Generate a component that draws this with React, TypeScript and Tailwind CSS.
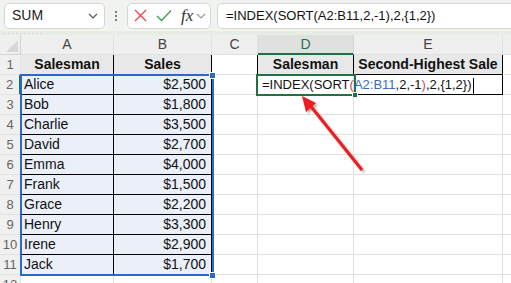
import React from 'react';

const font = { fontFamily: '"Liberation Sans", Arial, sans-serif' };

type CellProps = {
  w: string;
  className?: string;
  children?: React.ReactNode;
};

const Cell: React.FC<CellProps> = ({ w, className = '', children }) => (
  <div className={`${w} h-[20px] shrink-0 border-r border-b border-[#e1e1e1] leading-[19px] whitespace-nowrap ${className}`}>
    {children}
  </div>
);

const rows: [string, string][] = [
  ['Alice', '$2,500'],
  ['Bob', '$1,800'],
  ['Charlie', '$3,500'],
  ['David', '$2,700'],
  ['Emma', '$4,000'],
  ['Frank', '$1,500'],
  ['Grace', '$2,200'],
  ['Henry', '$3,300'],
  ['Irene', '$2,900'],
  ['Jack', '$1,700'],
];

const Chevron = ({ className = '' }: { className?: string }) => (
  <svg width="10" height="6" viewBox="0 0 10 6" className={className}>
    <path d="M1 1l4 4 4-4" fill="none" stroke="currentColor" strokeWidth="1.2" />
  </svg>
);

const FormulaText = () => (
  <>
    <span>=INDEX(SORT</span>
    <span className="text-[#d2455a]">(</span>
    <span className="text-[#3a6bc4]">A2:B11</span>
    <span>,2,-1</span>
    <span className="text-[#d2455a]">)</span>
    <span>,2,{'{'}1,2{'}'})</span>
  </>
);

const FormulaBar = () => (
  <div className="bg-[#f1f3f0]">
    <div className="h-[31px] flex items-center pl-[4px] gap-0">
      <div className="w-[101px] h-[26px] bg-white border border-[#d6d6d6] rounded-[5px] flex items-center justify-between pl-[7px] pr-[6px] text-[14px] text-[#222]">
        <span>SUM</span>
        <Chevron className="text-[#555]" />
      </div>
      <div className="w-[22px] flex flex-col items-center gap-[2px]">
        <span className="w-[2px] h-[2px] bg-[#555] rounded-full" />
        <span className="w-[2px] h-[2px] bg-[#555] rounded-full" />
        <span className="w-[2px] h-[2px] bg-[#555] rounded-full" />
      </div>
      <div className="w-[84px] h-[26px] bg-white border border-[#d6d6d6] rounded-[5px] flex items-center pl-[6px] gap-[9px]">
        <svg width="13" height="13" viewBox="0 0 13 13">
          <path d="M1 1l11 11M12 1L1 12" stroke="#e0474c" strokeWidth="1.3" />
        </svg>
        <svg width="16" height="13" viewBox="0 0 16 13">
          <path d="M1 7l4.5 4.5L15 1.5" fill="none" stroke="#3e9a50" strokeWidth="1.3" />
        </svg>
        <div className="flex items-center gap-[3px]">
          <span className="italic text-[17px] text-[#333] leading-none" style={{ fontFamily: '"Liberation Serif", serif' }}>fx</span>
          <Chevron className="text-[#999]" />
        </div>
      </div>
      <div className="ml-[6px] flex-1 h-[26px] bg-white border border-[#d6d6d6] border-r-0 rounded-l-[5px] flex items-center pl-[8px] text-[13px] text-[#111]">
        =INDEX(SORT(A2:B11,2,-1),2,{'{'}1,2{'}'})
      </div>
    </div>
    <div className="h-[4px] bg-[#e6eee2] flex items-center pl-[4px] gap-[3px]">
      {Array.from({ length: 10 }).map((_, i) => (
        <span key={i} className="w-[1px] h-[1px] bg-[#c9d3c4]" />
      ))}
    </div>
  </div>
);

const W = {
  h: 'w-[21px]',
  a: 'w-[93px]',
  b: 'w-[98px]',
  c: 'w-[46px]',
  d: 'w-[96px]',
  e: 'w-[149px]',
  f: 'w-[40px]',
};

const hdr = 'bg-[#efefef] text-center text-[14px] text-[#444] border-[#d4d4d4]';
const rowHdr = 'bg-[#f0f0f0] text-center text-[13px] text-[#666] border-[#d4d4d4]';

const Sheet = () => (
  <div className="relative text-[14px] text-[#111]">
    {/* column headers */}
    <div className="flex">
      <div className={`${W.h} h-[20px] shrink-0 bg-[#efefef] border-r border-b border-[#d4d4d4] relative`}>
        <div className="absolute right-[2px] bottom-[2px] w-0 h-0 border-l-[12px] border-l-transparent border-b-[12px] border-b-[#d8d8d8]" />
      </div>
      <Cell w={W.a} className={hdr}>A</Cell>
      <Cell w={W.b} className={hdr}>B</Cell>
      <Cell w={W.c} className={hdr}>C</Cell>
      <Cell w={W.d} className="bg-[#e0e0e0] text-center text-[14px] text-[#1f7244] border-r-[#d4d4d4] border-b-2 border-b-[#1f7244]">D</Cell>
      <Cell w={W.e} className={hdr}>E</Cell>
      <Cell w={W.f} className={hdr}></Cell>
    </div>

    {/* row 1 */}
    <div className="flex">
      <Cell w={W.h} className={rowHdr}>1</Cell>
      <Cell w={W.a} className="bg-[#e8e8e8] font-bold text-center border-r-black border-b-black">Salesman</Cell>
      <Cell w={W.b} className="bg-[#e8e8e8] font-bold text-center border-r-black border-b-black">Sales</Cell>
      <Cell w={W.c} className="border-r-black" />
      <Cell w={W.d} className="bg-[#e8e8e8] font-bold text-center border-r-black border-b-black">Salesman</Cell>
      <Cell w={W.e} className="bg-[#e8e8e8] font-bold text-center border-r-black border-b-black">Second-Highest Sale</Cell>
      <Cell w={W.f} />
    </div>

    {rows.map(([name, sale], i) => {
      const n = i + 2;
      const first = n === 2;
      return (
        <div className="flex" key={n}>
          <Cell w={W.h} className={`${rowHdr} ${first ? 'text-[#1f7244] bg-[#e0e0e0] border-r-2 border-r-[#1f7244]' : ''}`}>{n}</Cell>
          <Cell w={W.a} className="bg-[#eaeff8] pl-[3px] border-r-black border-b-black">{name}</Cell>
          <Cell w={W.b} className="bg-[#eaeff8] text-right pr-[5px] border-r-black border-b-black">{sale}</Cell>
          <Cell w={W.c} className={first ? 'border-r-black' : ''} />
          <Cell w={W.d} className={first ? 'pl-[4px] text-[13px] text-[#111]' : ''}>
            {first && (
              <span className="relative z-10">
                <FormulaText />
                <span className="inline-block w-[1px] h-[16px] bg-black align-middle ml-[1px]" />
              </span>
            )}
          </Cell>
          <Cell w={W.e} className={first ? 'border-r-black border-b-black' : ''} />
          <Cell w={W.f} />
        </div>
      );
    })}

    <div className="flex">
      <Cell w={W.h} className={rowHdr}>12</Cell>
      <Cell w={W.a} />
      <Cell w={W.b} />
      <Cell w={W.c} />
      <Cell w={W.d} />
      <Cell w={W.e} />
      <Cell w={W.f} />
    </div>

    {/* selection range A2:B11 */}
    <div className="absolute left-[20px] top-[39px] w-[194px] h-[202px] border-2 border-[#2e68c0] pointer-events-none" />
    <div className="absolute left-[209px] top-[37px] w-[7px] h-[7px] bg-[#2e68c0] border border-white" />
    <div className="absolute left-[209px] top-[237px] w-[7px] h-[7px] bg-[#2e68c0] border border-white" />

    {/* active cell D2 */}
    <div className="absolute left-[256px] top-[39px] w-[100px] h-[22px] border-2 border-[#1f7244] pointer-events-none" />
    <div className="absolute left-[352px] top-[57px] w-[6px] h-[6px] bg-[#1f7244] border border-white" />
  </div>
);

const Arrow = () => (
  <svg className="absolute inset-0 pointer-events-none" width="511" height="283" viewBox="0 0 511 283">
    <defs>
      <filter id="sh" x="-20%" y="-20%" width="140%" height="140%">
        <feGaussianBlur stdDeviation="1.2" />
      </filter>
    </defs>
    <g transform="translate(2 2)" filter="url(#sh)" opacity="0.45">
      <line x1="362" y1="170" x2="309" y2="104" stroke="#555" strokeWidth="3" />
      <polygon points="302,96 316,103 306,112" fill="#555" />
    </g>
    <line x1="362" y1="170" x2="309" y2="104" stroke="#ee1c1c" strokeWidth="3" />
    <polygon points="302,96 316,103 306,112" fill="#ee1c1c" />
  </svg>
);

export default function App() {
  return (
    <div className="relative w-[511px] h-[283px] overflow-hidden bg-white" style={font}>
      <FormulaBar />
      <Sheet />
      <Arrow />
    </div>
  );
}
